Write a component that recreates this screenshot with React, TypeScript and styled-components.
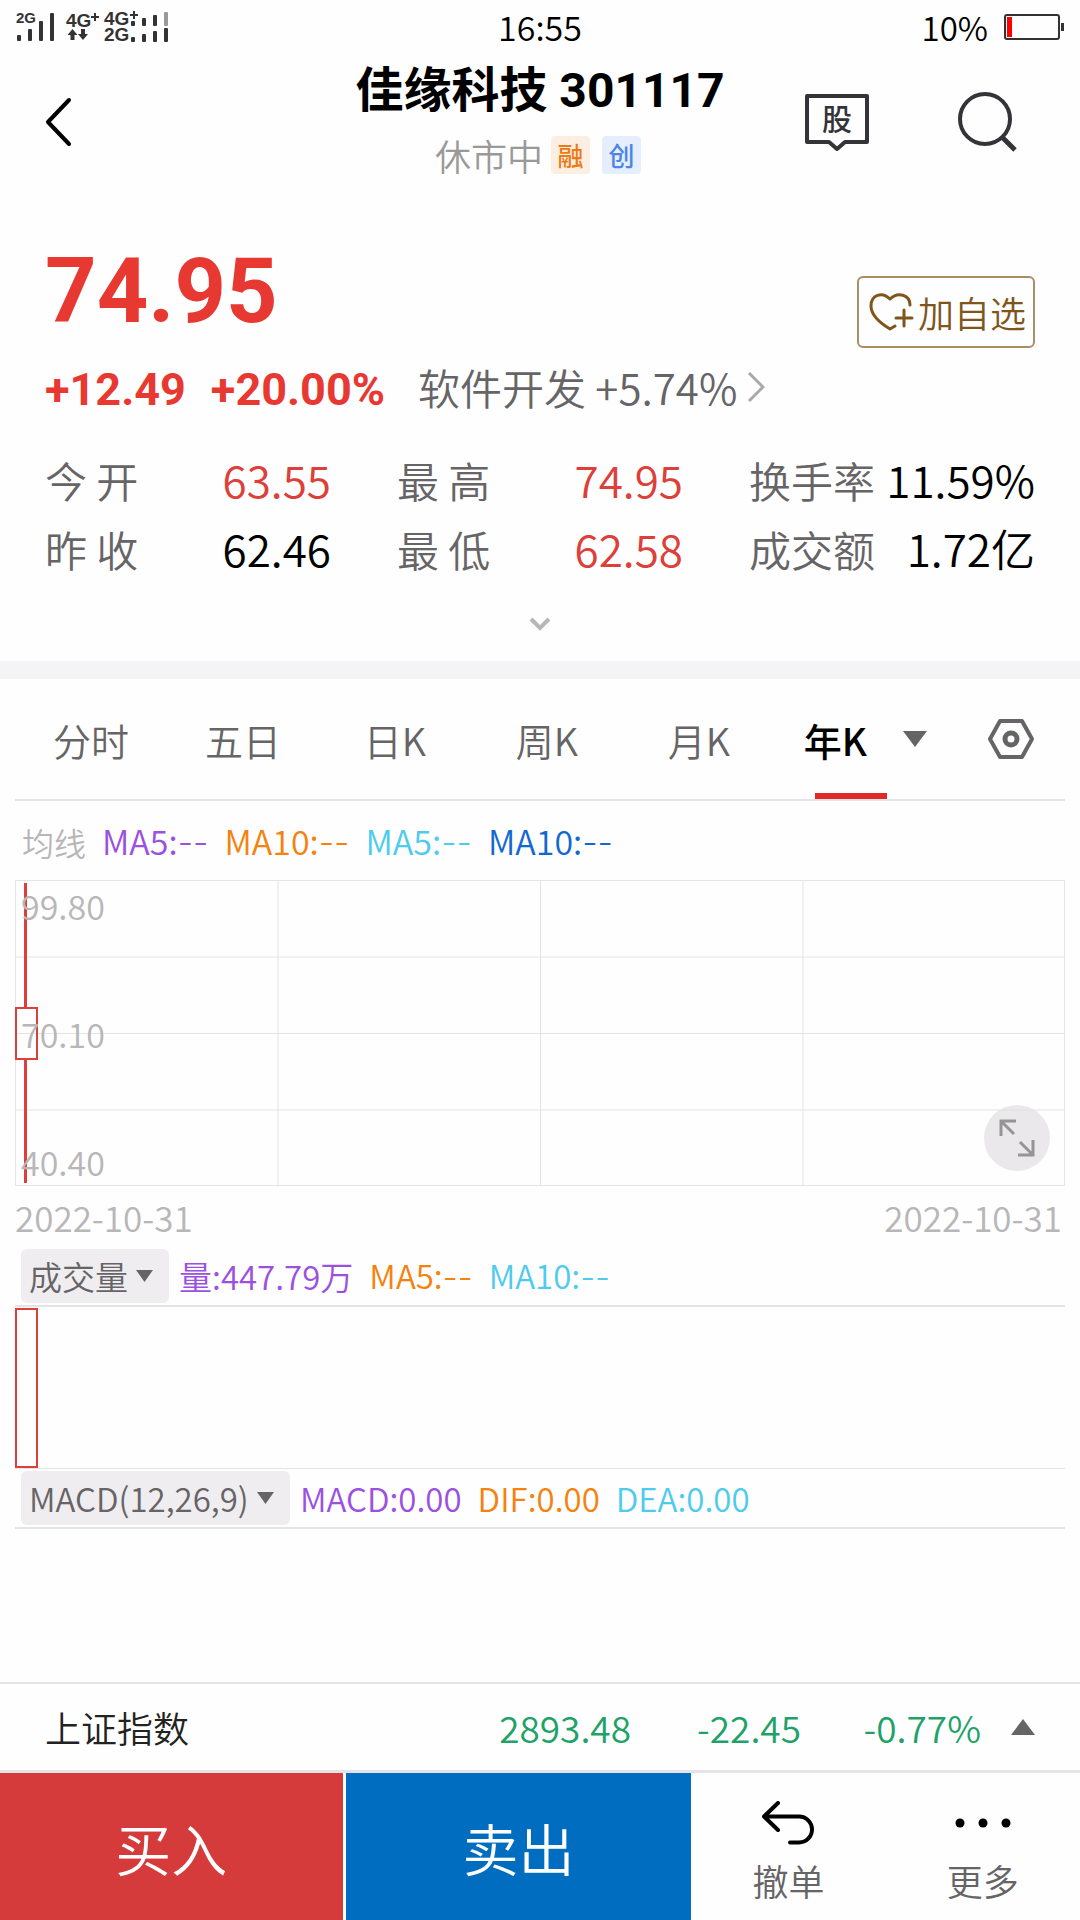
import React, { useState } from "react";
import styled, { createGlobalStyle } from "styled-components";

const sans = `"Noto Sans CJK SC", "Noto Sans", sans-serif`;
const bold = `Roboto, "Noto Sans CJK SC", sans-serif`;

const color = {
  red: "#dd3f3a",
  strongRed: "#e83832",
  black: "#000000",
  grey: "#666466",
  pale: "#b8b6b8",
  line: "#e4e3e5",
  purple: "#9b51e0",
  orange: "#f5820d",
  cyan: "#4ecbed",
  blue: "#1268d2",
  green: "#1fa268",
  brown: "#80551c",
};

const GlobalStyle = createGlobalStyle`
  * { box-sizing: border-box; }
  body { margin: 0; background: #fefefe; font-family: ${sans}; font-weight: 350; color: ${color.black}; }
  button, select { margin: 0; padding: 0; border: 0; background: none; color: inherit; font: inherit; }
  svg { display: block; flex: none; }
`;

const Page = styled.main`
  display: flex;
  flex-direction: column;
  min-height: 100vh;
`;

const StatusBar = styled.div`
  display: grid;
  grid-template-columns: 1fr auto 1fr;
  align-items: center;
  height: 56px;
  padding: 0 16px 2px;
  font-size: 34px;
  line-height: 52px;
`;

const Battery = styled.div`
  display: flex;
  justify-content: flex-end;
  align-items: center;
  gap: 16px;
  font-size: 33px;
`;

const Header = styled.header`
  display: grid;
  grid-template-columns: 1fr auto 1fr;
  align-items: center;
  padding: 0 62px 0 44px;
`;

const HeaderCenter = styled.div`
  display: flex;
  flex-direction: column;
  align-items: center;
  padding: 1px 0 3px 18px;
`;

const Title = styled.h1`
  margin: 0;
  font: 700 48px/68px ${bold};
`;

const SubTitle = styled.div`
  display: flex;
  align-items: center;
  gap: 8px;
  height: 60px;
  padding-right: 4px;
  font-size: 36px;
  line-height: 40px;
  color: #999;
`;

const Badges = styled.span`
  display: flex;
  gap: 12px;
`;

const Badge = styled.span<{ $fg: string; $bg: string }>`
  width: 39px;
  border-radius: 4px;
  background: ${(p) => p.$bg};
  color: ${(p) => p.$fg};
  font-size: 26px;
  font-weight: 500;
  line-height: 38px;
  text-align: center;
`;

const HeaderActions = styled.div`
  display: flex;
  justify-content: flex-end;
  align-items: center;
  gap: 87px;
`;

const IconButton = styled.button`
  display: flex;
  align-items: center;
  justify-content: center;
  justify-self: start;
`;

const StockBubble = styled(IconButton)`
  position: relative;
`;

const BubbleText = styled.span`
  position: absolute;
  inset: 0;
  font-size: 30px;
  font-weight: 500;
  line-height: 48px;
  text-align: center;
  color: #333338;
`;

const Quote = styled.section`
  display: flex;
  flex-direction: column;
  padding: 48px 45px 0;
`;

const PriceRow = styled.div`
  display: flex;
  justify-content: space-between;
  align-items: center;
  margin-bottom: 9px;
`;

const Price = styled.strong`
  font: 700 90px/110px ${bold};
  color: ${color.strongRed};
`;

const AddButton = styled.button`
  display: flex;
  align-items: center;
  gap: 4px;
  height: 72px;
  margin-top: 40px;
  padding: 0 7px 0 9px;
  border: 2px solid #ab8d68;
  border-radius: 6px;
  font-size: 36px;
  line-height: 60px;
  color: ${color.brown};
`;

const ChangeRow = styled.div`
  display: flex;
  align-items: baseline;
  gap: 25px;
  height: 72px;
  font: 700 45px/64px ${bold};
  color: ${color.strongRed};
`;

const SectorLink = styled.a`
  display: flex;
  align-items: center;
  gap: 10px;
  margin-left: 8px;
  font: 350 42px/60px ${sans};
  color: ${color.grey};
  text-decoration: none;
`;

const Stats = styled.dl`
  display: grid;
  grid-template-columns: repeat(3, 1fr);
  column-gap: 66px;
  margin: 16px 0 0;
`;

const Stat = styled.div`
  display: flex;
  justify-content: space-between;
  align-items: baseline;
  line-height: 69px;
`;

const StatName = styled.dt`
  font-size: 42px;
  color: ${color.grey};
  white-space: nowrap;
`;

const StatValue = styled.dd<{ $up?: boolean }>`
  margin: 0;
  font-size: 44px;
  color: ${(p) => (p.$up ? color.red : color.black)};
  white-space: nowrap;
`;

const ExpandButton = styled(IconButton)`
  align-self: center;
  height: 78px;
  padding: 4px 20px 0;
`;

const Divider = styled.div`
  height: 18px;
  background: #f4f4f6;
`;

const ChartArea = styled.section`
  display: flex;
  flex: 1;
  flex-direction: column;
  padding: 0 15px;
`;

const TabBar = styled.nav`
  display: flex;
  height: 122px;
  border-bottom: 2px solid ${color.line};
`;

const Tab = styled.button<{ $active: boolean }>`
  position: relative;
  display: flex;
  flex: 152;
  align-items: center;
  justify-content: ${(p) => (p.$active ? "flex-end" : "center")};
  gap: 36px;
  font-size: 38px;
  font-weight: ${(p) => (p.$active ? 500 : 350)};
  color: ${(p) => (p.$active ? color.black : color.grey)};

  &::after {
    content: "";
    display: ${(p) => (p.$active ? "block" : "none")};
    position: absolute;
    bottom: 0;
    left: 50%;
    width: 72px;
    height: 6px;
    margin-left: -36px;
    background: #e02a2a;
  }
`;

const TabSettings = styled.button`
  display: flex;
  flex: 107;
  align-items: center;
  justify-content: flex-end;
  padding-right: 31px;
`;

const Legend = styled.div<{ $tall?: boolean }>`
  display: flex;
  align-items: center;
  gap: 16px;
  height: ${(p) => (p.$tall ? 79 : 60)}px;
  padding: ${(p) => (p.$tall ? "3px 0 0 7px" : "0 0 0 6px")};
  border-bottom: ${(p) => (p.$tall ? "0" : `2px solid ${color.line}`)};
  font-size: ${(p) => (p.$tall ? 34 : 33)}px;
  line-height: 52px;
  white-space: nowrap;
`;

const LegendName = styled.span`
  font-size: 32px;
  color: ${color.pale};
`;

const Reading = styled.span<{ $color: string }>`
  color: ${(p) => p.$color};
`;

const Dashes = styled.span`
  font-family: Inter, sans-serif;
`;

const Picker = styled.label`
  position: relative;
  display: flex;
  align-items: center;
  margin-right: -6px;

  svg {
    position: absolute;
    right: 16px;
    pointer-events: none;
  }
`;

const PickerSelect = styled.select`
  appearance: none;
  height: 54px;
  padding: 0 41px 0 8px;
  border-radius: 6px;
  background: #efedef;
  color: ${color.grey};
  line-height: 50px;
`;

const KLine = styled.div`
  position: relative;
  display: flex;
  flex-direction: column;
  justify-content: space-between;
  height: 306px;
  padding: 2px 0 0 6px;
`;

const ChartCanvas = styled.svg`
  position: absolute;
  inset: 0;
  width: 100%;
  height: 100%;
`;

const AxisLabel = styled.span`
  position: relative;
  font-size: 34px;
  line-height: 48px;
  color: ${color.pale};
`;

const FullScreen = styled.button`
  position: absolute;
  right: 15px;
  bottom: 15px;
  display: flex;
  align-items: center;
  justify-content: center;
  width: 66px;
  height: 66px;
  border-radius: 50%;
  background: rgba(224, 220, 224, 0.65);
`;

const Dates = styled.div`
  display: flex;
  justify-content: space-between;
  padding-right: 3px;
  font-size: 35px;
  line-height: 61px;
  color: ${color.pale};
`;

const VolumePane = styled.div`
  position: relative;
  height: 162px;
  border-bottom: 1px solid ${color.line};
`;

const MacdPane = styled.div`
  flex: 1;
  min-height: 120px;
`;

const IndexBar = styled.div`
  display: grid;
  grid-template-columns: 1fr auto 170px 180px 54px;
  align-items: center;
  height: 91px;
  padding: 0 45px;
  border-top: 2px solid ${color.line};
  border-bottom: 3px solid ${color.line};
  font-size: 37px;
  line-height: 80px;
  color: ${color.green};
  text-align: right;
`;

const IndexName = styled.span`
  font-size: 36px;
  color: #222;
  text-align: left;
`;

const IndexToggle = styled.button`
  display: flex;
  justify-content: flex-end;
`;

const TradeBar = styled.footer`
  display: grid;
  grid-template-columns: 16fr 16fr 9fr 9fr;
  height: 147px;
`;

const TradeButton = styled.button<{ $bg: string }>`
  border-right: ${(p) => (p.$bg === "#d53b3a" ? "3px solid #fff" : "0")};
  background: ${(p) => p.$bg};
  color: #fff;
  font-size: 56px;
  line-height: 80px;
`;

const ActionButton = styled.button`
  display: flex;
  flex-direction: column;
  align-items: center;
  justify-content: flex-end;
  padding-bottom: 10px;
  font-size: 36px;
  line-height: 60px;
  color: ${color.grey};
`;

const ActionIcon = styled.span`
  display: flex;
  align-items: center;
  height: 54px;
`;

const Triangle = ({ w = 24, h = 16, up = false, fill = color.grey }) => (
  <svg width={w} height={h} viewBox="0 0 24 16" aria-hidden="true" preserveAspectRatio="none">
    <path d={up ? "M12 0L24 16H0z" : "M0 0H24L12 16z"} fill={fill} />
  </svg>
);

const Signals = () => (
  <svg width="156" height="42" viewBox="0 -4 156 42" fill="#333" fontFamily="Liberation Sans, sans-serif" fontWeight="700">
    <text x="0" y="13" fontSize="15">2G</text>
    <rect x="1" y="25" width="4" height="6" rx="1" />
    <rect x="12" y="19" width="4" height="12" rx="1" />
    <rect x="23" y="11" width="4" height="20" rx="1" />
    <rect x="34" y="3" width="4" height="28" rx="1" />
    <text x="50" y="17" fontSize="19">4G</text>
    <path d="M75 7h8M79 3v8" stroke="#333" strokeWidth="2" />
    <path d="M56.500 19l5 6h-3v5h-4v-5h-3zM67 30l-5-6h3v-5h4v5h3z" />
    <text x="88" y="15" fontSize="19">4G</text>
    <path d="M114 5h8M118 1v8" stroke="#333" strokeWidth="2" />
    <text x="88" y="31" fontSize="19">2G</text>
    <rect x="115" y="11" width="4" height="5" rx="1" />
    <rect x="126" y="8" width="4" height="8" rx="1" />
    <rect x="137" y="5" width="4" height="11" rx="1" />
    <rect x="148" y="2" width="4" height="14" rx="1" fill="#999" />
    <rect x="115" y="27" width="4" height="5" rx="1" />
    <rect x="126" y="24" width="4" height="8" rx="1" />
    <rect x="137" y="21" width="4" height="11" rx="1" />
    <rect x="148" y="18" width="4" height="14" rx="1" />
  </svg>
);

const stats = [
  { name: "今 开", value: "63.55", up: true },
  { name: "最 高", value: "74.95", up: true },
  { name: "换手率", value: "11.59%", up: false },
  { name: "昨 收", value: "62.46", up: false },
  { name: "最 低", value: "62.58", up: true },
  { name: "成交额", value: "1.72亿", up: false },
];

const averages = [
  { name: "MA5:", tint: color.purple },
  { name: "MA10:", tint: color.orange },
  { name: "MA5:", tint: color.cyan },
  { name: "MA10:", tint: color.blue },
];

const tabs = ["分时", "五日", "日K", "周K", "月K", "年K"];

export default function App() {
  const [active, setActive] = useState("年K");

  return (
    <>
      <GlobalStyle />
      <Page>
        <StatusBar>
          <Signals />
          <span>16:55</span>
          <Battery>
            <span>10%</span>
            <svg width="60" height="26" viewBox="0 0 60 26">
              <rect x="1" y="1" width="54" height="24" rx="2" fill="none" stroke="#333" strokeWidth="2" />
              <rect x="3" y="3" width="5" height="20" fill="#f00" />
              <rect x="57" y="9" width="3" height="8" fill="#333" />
            </svg>
          </Battery>
        </StatusBar>

        <Header>
          <IconButton aria-label="返回">
            <svg width="28" height="52" viewBox="0 0 28 52" fill="none" stroke="#000" strokeWidth="4" strokeLinecap="round" strokeLinejoin="round">
              <path d="M25 4L4 26L25 48" />
            </svg>
          </IconButton>
          <HeaderCenter>
            <Title>佳缘科技 301117</Title>
            <SubTitle>
              <span>休市中</span>
              <Badges>
                <Badge $fg="#ec7a16" $bg="#fdeee2">融</Badge>
                <Badge $fg="#4a86e8" $bg="#e6eefd">创</Badge>
              </Badges>
            </SubTitle>
          </HeaderCenter>
          <HeaderActions>
            <StockBubble>
              <svg width="64" height="58" viewBox="0 0 64 58" fill="none" stroke="#333338" strokeWidth="4" strokeLinejoin="round">
                <path d="M2 3H62V49H40L32 56L24 49H2z" />
              </svg>
              <BubbleText>股</BubbleText>
            </StockBubble>
            <IconButton aria-label="搜索">
              <svg width="62" height="62" viewBox="0 0 62 62" fill="none" stroke="#333338" strokeWidth="4">
                <circle cx="29" cy="28" r="25" />
                <path d="M46 46L59 59" strokeWidth="5" />
              </svg>
            </IconButton>
          </HeaderActions>
        </Header>

        <Quote>
          <PriceRow>
            <Price>74.95</Price>
            <AddButton>
              <svg width="46" height="40" viewBox="0 0 46 40" fill="none" stroke={color.brown} strokeWidth="3" strokeLinecap="round" strokeLinejoin="round">
                <path d="M42 13C42 3 30 -1 22 7C14 -1 3 3 3 14C3 24 12 31 22 37L27 34" />
                <path d="M28 26H44M36 18V34" />
              </svg>
              <span>加自选</span>
            </AddButton>
          </PriceRow>
          <ChangeRow>
            <span>+12.49</span>
            <span>+20.00%</span>
            <SectorLink href="#sector">
              <span>软件开发 +5.74%</span>
              <svg width="18" height="32" viewBox="0 0 18 32" fill="none" stroke="#aaa8aa" strokeWidth="3">
                <path d="M2 2L16 16L2 30" />
              </svg>
            </SectorLink>
          </ChangeRow>
          <Stats>
            {stats.map((s) => (
              <Stat key={s.name}>
                <StatName>{s.name}</StatName>
                <StatValue $up={s.up}>{s.value}</StatValue>
              </Stat>
            ))}
          </Stats>
          <ExpandButton aria-label="展开">
            <svg width="22" height="14" viewBox="0 0 22 14" fill="none" stroke="#b8b6b8" strokeWidth="4">
              <path d="M2 2L11 11L20 2" />
            </svg>
          </ExpandButton>
        </Quote>

        <Divider />

        <ChartArea>
          <TabBar>
            {tabs.map((t) => (
              <Tab key={t} $active={t === active} onClick={() => setActive(t)}>
                {t}
                {t === active && <Triangle />}
              </Tab>
            ))}
            <TabSettings aria-label="设置">
              <svg width="46" height="40" viewBox="0 0 46 40" fill="none" stroke={color.grey} strokeWidth="4" strokeLinejoin="round">
                <path d="M12 2H34L44 20L34 38H12L2 20z" />
                <circle cx="23" cy="20" r="6" strokeWidth="5" />
              </svg>
            </TabSettings>
          </TabBar>

          <Legend $tall>
            <LegendName>均线</LegendName>
            {averages.map((a) => (
              <Reading key={a.tint} $color={a.tint}>
                {a.name}
                <Dashes>--</Dashes>
              </Reading>
            ))}
          </Legend>

          <KLine>
            <ChartCanvas>
              <g fill={color.line}>
                <rect x="0" y="0" width="100%" height="1" />
                <rect x="0" y="25%" width="100%" height="1" />
                <rect x="0" y="50%" width="100%" height="1" />
                <rect x="0" y="75%" width="100%" height="1" />
                <rect x="0" y="305" width="100%" height="1" />
                <rect x="0" y="0" width="1" height="100%" />
                <rect x="25%" y="0" width="1" height="100%" />
                <rect x="50%" y="0" width="1" height="100%" />
                <rect x="75%" y="0" width="1" height="100%" />
                <rect x="100%" y="0" width="1" height="100%" transform="translate(-1 0)" />
              </g>
              <g fill={color.red}>
                <rect x="9" y="3" width="3" height="124" />
                <rect x="9" y="180" width="3" height="123" />
              </g>
              <rect x="1" y="128" width="21" height="51" fill="none" stroke={color.red} strokeWidth="2" />
            </ChartCanvas>
            <AxisLabel>99.80</AxisLabel>
            <AxisLabel>70.10</AxisLabel>
            <AxisLabel>40.40</AxisLabel>
            <FullScreen aria-label="全屏">
              <svg width="36" height="38" viewBox="0 0 36 38" fill="none" stroke="#979497" strokeWidth="3">
                <path d="M2 17V2H17M2 2L15 15M34 21V36H19M34 36L21 23" />
              </svg>
            </FullScreen>
          </KLine>
          <Dates>
            <time>2022-10-31</time>
            <time>2022-10-31</time>
          </Dates>

          <Legend>
            <Picker>
              <PickerSelect aria-label="成交量">
                <option>成交量</option>
              </PickerSelect>
              <Triangle w={17} h={12} />
            </Picker>
            <Reading $color={color.purple}>量:447.79万</Reading>
            <Reading $color={color.orange}>
              MA5:<Dashes>--</Dashes>
            </Reading>
            <Reading $color={color.cyan}>
              MA10:<Dashes>--</Dashes>
            </Reading>
          </Legend>
          <VolumePane>
            <ChartCanvas>
              <rect x="1" y="2" width="21" height="158" fill="none" stroke={color.red} strokeWidth="2" />
            </ChartCanvas>
          </VolumePane>

          <Legend>
            <Picker>
              <PickerSelect aria-label="MACD">
                <option>MACD(12,26,9)</option>
              </PickerSelect>
              <Triangle w={17} h={12} />
            </Picker>
            <Reading $color={color.purple}>MACD:0.00</Reading>
            <Reading $color={color.orange}>DIF:0.00</Reading>
            <Reading $color={color.cyan}>DEA:0.00</Reading>
          </Legend>
          <MacdPane />
        </ChartArea>

        <IndexBar>
          <IndexName>上证指数</IndexName>
          <span>2893.48</span>
          <span>-22.45</span>
          <span>-0.77%</span>
          <IndexToggle aria-label="展开指数">
            <Triangle up />
          </IndexToggle>
        </IndexBar>

        <TradeBar>
          <TradeButton $bg="#d53b3a">买入</TradeButton>
          <TradeButton $bg="#006dc0">卖出</TradeButton>
          <ActionButton>
            <ActionIcon>
              <svg width="52" height="44" viewBox="0 0 52 44" fill="none" stroke="#000" strokeWidth="4" strokeLinecap="round" strokeLinejoin="round">
                <path d="M16 2L2 15.500L16 29M2 15.500H37A13 13 0 0 1 37 41.500H28" />
              </svg>
            </ActionIcon>
            撤单
          </ActionButton>
          <ActionButton>
            <ActionIcon>
              <svg width="56" height="10" viewBox="0 0 56 10">
                <circle cx="5" cy="5" r="4.500" />
                <circle cx="28" cy="5" r="4.500" />
                <circle cx="51" cy="5" r="4.500" />
              </svg>
            </ActionIcon>
            更多
          </ActionButton>
        </TradeBar>
      </Page>
    </>
  );
}
